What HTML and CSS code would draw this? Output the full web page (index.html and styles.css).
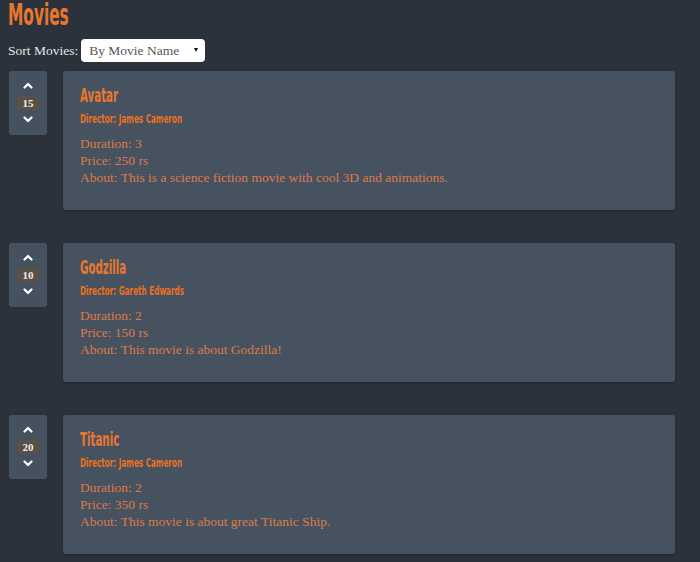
FILE: index.html
```html
<!DOCTYPE html>
<html lang="en">
<head>
<meta charset="utf-8">
<title>Movies</title>
<link rel="stylesheet" href="styles.css">
</head>
<body>
<h1 class="title"><span class="narrow">Movies</span></h1>
<div class="sort">
  <label class="sort-label" for="sort">Sort Movies:</label>
  <span class="select-wrap">
    <select class="select" id="sort">
      <option>By Movie Name</option>
      <option>By Votes</option>
    </select>
  </span>
</div>

<div class="movie">
  <div class="vote">
    <svg class="chev" viewBox="0 0 10 7" width="10" height="7"><polyline points="1.5,5.5 5,2 8.5,5.5"/></svg>
    <span class="count">15</span>
    <svg class="chev" viewBox="0 0 10 7" width="10" height="7"><polyline points="1.5,1.5 5,5 8.5,1.5"/></svg>
  </div>
  <div class="card">
    <h2 class="name"><span class="narrow">Avatar</span></h2>
    <div class="director"><span class="narrow-d">Director: James Cameron</span></div>
    <p class="info">Duration: 3<br>Price: 250 rs<br>About: This is a science fiction movie with cool 3D and animations.</p>
  </div>
</div>

<div class="movie">
  <div class="vote">
    <svg class="chev" viewBox="0 0 10 7" width="10" height="7"><polyline points="1.5,5.5 5,2 8.5,5.5"/></svg>
    <span class="count">10</span>
    <svg class="chev" viewBox="0 0 10 7" width="10" height="7"><polyline points="1.5,1.5 5,5 8.5,1.5"/></svg>
  </div>
  <div class="card">
    <h2 class="name"><span class="narrow">Godzilla</span></h2>
    <div class="director"><span class="narrow-d">Director: Gareth Edwards</span></div>
    <p class="info">Duration: 2<br>Price: 150 rs<br>About: This movie is about Godzilla!</p>
  </div>
</div>

<div class="movie">
  <div class="vote">
    <svg class="chev" viewBox="0 0 10 7" width="10" height="7"><polyline points="1.5,5.5 5,2 8.5,5.5"/></svg>
    <span class="count">20</span>
    <svg class="chev" viewBox="0 0 10 7" width="10" height="7"><polyline points="1.5,1.5 5,5 8.5,1.5"/></svg>
  </div>
  <div class="card">
    <h2 class="name"><span class="narrow">Titanic</span></h2>
    <div class="director"><span class="narrow-d">Director: James Cameron</span></div>
    <p class="info">Duration: 2<br>Price: 350 rs<br>About: This movie is about great Titanic Ship.</p>
  </div>
</div>
</body>
</html>
```

FILE: styles.css
```css
html, body {
  background: #2b323c;
}
body {
  margin: 0 8px;
  font-family: "Liberation Serif", "DejaVu Serif", serif;
  color: #e6e6e6;
}
.narrow {
  display: inline-block;
  transform: scaleX(0.57);
  transform-origin: left center;
  white-space: nowrap;
}
.narrow-d {
  display: inline-block;
  transform: scaleX(0.62);
  transform-origin: left center;
  white-space: nowrap;
}
.title {
  margin: 0;
  font-family: "DejaVu Sans Condensed", "Liberation Sans", sans-serif;
  font-weight: 700;
  font-size: 30px;
  line-height: 30px;
  color: #e8772e;
}
.sort {
  display: flex;
  align-items: center;
  margin-top: 9px;
  height: 23px;
}
.sort-label {
  font-size: 13.5px;
  color: #e4e4e4;
  margin-right: 3px;
}
.select-wrap {
  position: relative;
  display: inline-block;
}
.select-wrap::after {
  content: "";
  position: absolute;
  right: 7px;
  top: 9px;
  border-left: 2.5px solid transparent;
  border-right: 2.5px solid transparent;
  border-top: 4px solid #111;
  pointer-events: none;
}
.select {
  -webkit-appearance: none;
  appearance: none;
  width: 124px;
  height: 23px;
  border: none;
  border-radius: 4px;
  background: #fff;
  padding: 0 0 0 8px;
  font-family: "Liberation Serif", serif;
  font-size: 13.5px;
  color: #555;
  outline: none;
}
.movie {
  display: flex;
  align-items: flex-start;
  margin-top: 9px;
  margin-bottom: 33px;
}
.movie + .movie {
  margin-top: 0;
}
.vote {
  margin-left: 1px;
  height: 64px;
  box-sizing: border-box;
  padding: 11px 8px 0;
  background: #465160;
  border-radius: 3px;
  display: flex;
  flex-direction: column;
  align-items: center;
}
.chev {
  display: block;
  fill: none;
  stroke: #fff;
  stroke-width: 2.2;
  stroke-linecap: round;
  stroke-linejoin: round;
}
.count {
  display: block;
  margin: 7px 0 6px;
  padding: 0 5.5px;
  height: 14px;
  line-height: 14px;
  border-radius: 3px;
  background: #5a5048;
  color: #f1ebe3;
  font-weight: 700;
  font-size: 11px;
}
.card {
  margin-left: 16px;
  width: 612px;
  height: 139px;
  box-sizing: border-box;
  padding: 12px 17px;
  background: #475261;
  border-radius: 3px;
  box-shadow: 0 1px 2px rgba(0, 0, 0, 0.25);
}
.name {
  margin: 0;
  font-family: "DejaVu Sans Condensed", "Liberation Sans", sans-serif;
  font-weight: 700;
  font-size: 20px;
  line-height: 24px;
  color: #e8772e;
}
.director {
  margin-top: 4px;
  font-family: "DejaVu Sans Condensed", "Liberation Sans", sans-serif;
  font-weight: 700;
  font-size: 13px;
  line-height: 16px;
  color: #e8701f;
}
.info {
  margin: 8px 0 0;
  font-size: 13.5px;
  line-height: 17px;
  color: #dd7a48;
}
```
